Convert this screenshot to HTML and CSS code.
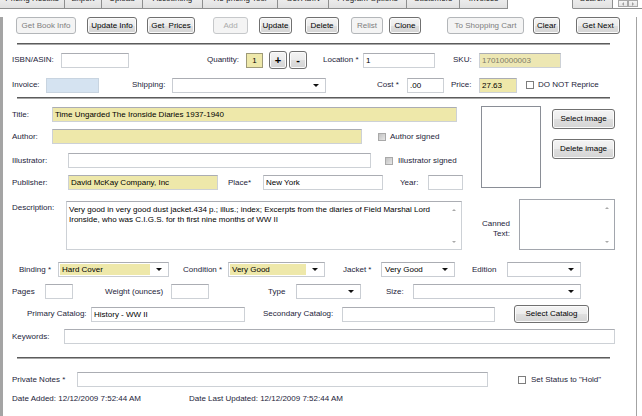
FILE: index.html
```html
<!DOCTYPE html>
<html>
<head>
<meta charset="utf-8">
<title>Book Detail</title>
<link rel="stylesheet" href="styles.css">
</head>
<body>
<div class="tabs">
  <div class="tab tab-pricing">Pricing Results</div>
  <div class="tab tab-export">Export</div>
  <div class="tab tab-upload">Upload</div>
  <div class="tab tab-accounting">Accounting</div>
  <div class="tab tab-repricing">Re-pricing Tool</div>
  <div class="tab tab-asin">Get ASIN</div>
  <div class="tab tab-options">Program Options</div>
  <div class="tab tab-customers">Customers</div>
  <div class="tab tab-invoices">Invoices</div>
  <div class="tab tab-detail current">Book Detail</div>
  <div class="tab tab-search">Search</div>
  <div class="tab-rest">
    <div class="tab-arrow"><span class="tri-left"></span></div>
    <div class="tab-arrow"><span class="tri-right"></span></div>
  </div>
</div>
<div class="page">
  <div class="toolbar">
    <div class="btn dis tb-getinfo">Get Book Info</div>
    <div class="btn tb-updinfo">Update Info</div>
    <div class="btn tb-prices">Get&nbsp; Prices</div>
    <div class="btn dis faint tb-add">Add</div>
    <div class="btn tb-update">Update</div>
    <div class="btn tb-delete">Delete</div>
    <div class="btn dis tb-relist">Relist</div>
    <div class="btn tb-clone">Clone</div>
    <div class="btn dis tb-cart">To Shopping Cart</div>
    <div class="btn tb-clear">Clear</div>
    <div class="btn tb-next">Get Next</div>
  </div>
  <div class="sep sep-top"></div>

  <div class="row row-isbn">
    <span class="lbl isbn-lbl">ISBN/ASIN:</span>
    <div class="inp isbn-inp"></div>
    <span class="lbl qty-lbl">Quantity:</span>
    <div class="qty-box">1</div>
    <div class="btn pm plus-btn">+</div>
    <div class="btn pm minus-btn">-</div>
    <span class="lbl loc-lbl">Location *</span>
    <div class="inp loc-inp">1</div>
    <span class="lbl sku-lbl">SKU:</span>
    <div class="inp sku-inp">17010000003</div>
  </div>

  <div class="row row-invoice">
    <span class="lbl inv-lbl">Invoice:</span>
    <div class="inp inv-inp"></div>
    <span class="lbl ship-lbl">Shipping:</span>
    <div class="combo ship-sel"><span class="val"></span></div>
    <span class="lbl cost-lbl">Cost *</span>
    <div class="inp cost-inp">.00</div>
    <span class="lbl price-lbl">Price:</span>
    <div class="inp yel price-inp">27.63</div>
    <span class="chk norep-chk"></span>
    <span class="lbl norep-lbl">DO NOT Reprice</span>
  </div>
  <div class="sep sep-mid"></div>

  <div class="mid">
    <div class="fields">
      <div class="f-row">
        <span class="lbl title-lbl">Title:</span>
        <div class="inp yel title-inp">Time Ungarded The Ironside Diaries 1937-1940</div>
      </div>
      <div class="f-row f-author">
        <span class="lbl title-lbl">Author:</span>
        <div class="inp yel author-inp"></div>
        <span class="chk gray asig-chk"></span>
        <span class="lbl asig-lbl">Author signed</span>
      </div>
      <div class="f-row f-illus">
        <span class="lbl illus-lbl">Illustrator:</span>
        <div class="inp illus-inp"></div>
        <span class="chk gray isig-chk"></span>
        <span class="lbl isig-lbl">Illustrator signed</span>
      </div>
      <div class="f-row f-pub">
        <span class="lbl illus-lbl">Publisher:</span>
        <div class="inp yel pub-inp">David McKay Company, Inc</div>
        <span class="lbl place-lbl">Place*</span>
        <div class="inp place-inp">New York</div>
        <span class="lbl year-lbl">Year:</span>
        <div class="inp year-inp"></div>
      </div>
    </div>
    <div class="imgbox"></div>
    <div class="imgbtns">
      <div class="btn imgbtn">Select image</div>
      <div class="btn imgbtn">Delete image</div>
    </div>
  </div>

  <div class="desc">
    <span class="lbl desc-lbl">Description:</span>
    <div class="ta desc-ta">
      <div class="ta-text">Very good in very good dust jacket.434 p.; illus.; index; Excerpts from the diaries of Field Marshal Lord Ironside, who was C.I.G.S. for th first nine months of WW II</div>
      <div class="ta-scroll"><span class="tri-up"></span><span class="tri-down"></span></div>
    </div>
    <span class="lbl canned-lbl">Canned<br>Text:</span>
    <div class="ta canned-ta">
      <div class="ta-text"></div>
      <div class="ta-scroll"><span class="tri-up"></span><span class="tri-down"></span></div>
    </div>
  </div>

  <div class="row row-binding">
    <span class="lbl bind-lbl">Binding *</span>
    <div class="combo bind-sel"><span class="val yel">Hard Cover</span></div>
    <span class="lbl cond-lbl">Condition *</span>
    <div class="combo cond-sel"><span class="val yel">Very Good</span></div>
    <span class="lbl jack-lbl">Jacket *</span>
    <div class="combo jack-sel"><span class="val">Very Good</span></div>
    <span class="lbl ed-lbl">Edition</span>
    <div class="combo ed-sel"><span class="val"></span></div>
  </div>

  <div class="row row-pages">
    <span class="lbl pages-lbl">Pages</span>
    <div class="inp pages-inp"></div>
    <span class="lbl wt-lbl">Weight (ounces)</span>
    <div class="inp wt-inp"></div>
    <span class="lbl type-lbl">Type</span>
    <div class="combo type-sel"><span class="val"></span></div>
    <span class="lbl size-lbl">Size:</span>
    <div class="combo size-sel"><span class="val"></span></div>
  </div>

  <div class="row row-catalog">
    <span class="lbl pcat-lbl">Primary Catalog:</span>
    <div class="inp pcat-inp">History - WW II</div>
    <span class="lbl scat-lbl">Secondary Catalog:</span>
    <div class="inp scat-inp"></div>
    <div class="btn selcat-btn">Select Catalog</div>
  </div>

  <div class="row row-keywords">
    <span class="lbl kw-lbl">Keywords:</span>
    <div class="inp kw-inp"></div>
  </div>
  <div class="sep sep-bottom"></div>

  <div class="row row-notes">
    <span class="lbl pn-lbl">Private Notes *</span>
    <div class="inp pn-inp"></div>
    <span class="chk hold-chk"></span>
    <span class="lbl hold-lbl">Set Status to "Hold"</span>
  </div>

  <div class="row row-dates">
    <span class="lbl date-added">Date Added: 12/12/2009 7:52:44 AM</span>
    <span class="lbl">Date Last Updated: 12/12/2009 7:52:44 AM</span>
  </div>
</div>
</body>
</html>
```

FILE: styles.css
```css
* { box-sizing: border-box; }

html, body { margin: 0; padding: 0; }

body {
  width: 642px;
  height: 416px;
  overflow: hidden;
  background: #ffffff;
  font-family: "Liberation Sans", Arial, sans-serif;
  font-size: 8px;
  line-height: 10px;
  color: #000;
}

/* ---------- tab strip ---------- */
.tabs {
  display: flex;
  align-items: flex-end;
  height: 9px;
  overflow: hidden;
}
.tab {
  flex: none;
  height: 18px;
  display: flex;
  align-items: flex-end;
  justify-content: center;
  padding-bottom: 4px;
  background: linear-gradient(#f7f7f7, #e1e1e1);
  border-right: 1px solid #8e8f8f;
  border-bottom: 1px solid #8e8f8f;
  color: #1b1b1b;
  white-space: nowrap;
}
.tab.current {
  background: #ffffff;
  border-bottom-color: #ffffff;
  padding-bottom: 7px;
}
.tab-pricing { width: 65px; }
.tab-export { width: 37px; }
.tab-upload { width: 41px; }
.tab-accounting { width: 60px; }
.tab-repricing { width: 75px; }
.tab-asin { width: 51px; }
.tab-options { width: 78px; }
.tab-customers { width: 53px; }
.tab-invoices { width: 48px; }
.tab-detail { width: 65px; }
.tab-search { width: 40px; }
.tab-rest {
  flex: 1;
  height: 9px;
  display: flex;
  justify-content: flex-end;
  align-items: flex-start;
  padding-right: 4px;
  border-bottom: 1px solid #8e8f8f;
}
.tab-arrow {
  width: 10px;
  height: 7px;
  border: 1px solid #a8a8a8;
  background: linear-gradient(#f6f6f6, #e4e4e4);
  display: flex;
  align-items: center;
  justify-content: center;
}
.tri-left {
  border-top: 2px solid transparent;
  border-bottom: 2px solid transparent;
  border-right: 2px solid #a0a0a0;
}
.tri-right {
  border-top: 2px solid transparent;
  border-bottom: 2px solid transparent;
  border-left: 2px solid #a0a0a0;
}

/* ---------- page ---------- */
.page {
  width: 637px;
  height: 407px;
  border-left: 3px solid #a4a4a4;
  border-right: 1px solid #a3a3a3;
  background: #ffffff;
}

.row {
  display: flex;
  align-items: center;
}

.lbl {
  flex: none;
  white-space: nowrap;
  color: #24243a;
}

.inp {
  flex: none;
  height: 15px;
  border: 1px solid #cdd1d6;
  border-top-color: #abadb3;
  background: #ffffff;
  padding: 0 2px;
  line-height: 13px;
  white-space: nowrap;
  overflow: hidden;
  color: #000;
}
.yel { background: #eee8aa; }

.chk {
  flex: none;
  width: 8px;
  height: 8px;
  border: 1px solid #7d7d7d;
  background: #ffffff;
}
.chk.gray {
  border-color: #a9a9a9;
  background: linear-gradient(135deg, #c2c2c2, #e6e6e6);
}

.combo {
  flex: none;
  height: 15px;
  display: flex;
  align-items: stretch;
  padding: 1px;
  border: 1px solid #c9cdd3;
  border-top-color: #abadb3;
  background: #ffffff;
}
.combo .val {
  flex: 1;
  padding-left: 2px;
  line-height: 11px;
  white-space: nowrap;
  overflow: hidden;
}
.combo::after {
  content: "";
  flex: none;
  align-self: center;
  margin: 0 5px 0 6px;
  border-left: 3px solid transparent;
  border-right: 3px solid transparent;
  border-top: 3px solid #111;
}

.btn {
  flex: none;
  height: 17px;
  display: flex;
  align-items: center;
  justify-content: center;
  border: 1px solid #707070;
  border-radius: 3px;
  background: linear-gradient(#f4f4f4 0%, #ececec 50%, #dfdfdf 51%, #d4d4d4 100%);
  box-shadow: inset 0 0 0 1px #fbfbfb;
  color: #000;
  white-space: nowrap;
}
.btn.dis {
  border-color: #b3b6b9;
  background: #f4f4f4;
  box-shadow: none;
  color: #7e7e7e;
}
.btn.faint { color: #ababab; border-color: #c6c8ca; }

.sep {
  margin-left: 14px;
  width: 593px;
  height: 2px;
  background: linear-gradient(#5c5c5c 50%, #a8a8a8 50%);
}

/* ---------- toolbar ---------- */
.toolbar {
  display: flex;
  margin-top: 8px;
  height: 17px;
}
.tb-getinfo { margin-left: 13px; width: 60px; }
.tb-updinfo { margin-left: 11px; width: 50px; }
.tb-prices { margin-left: 10px; width: 48px; }
.tb-add { margin-left: 18px; width: 35px; }
.tb-update { margin-left: 11px; width: 33px; }
.tb-delete { margin-left: 13px; width: 34px; }
.tb-relist { margin-left: 12px; width: 32px; }
.tb-clone { margin-left: 6px; width: 32px; }
.tb-cart { margin-left: 26px; width: 77px; }
.tb-clear { margin-left: 9px; width: 27px; }
.tb-next { margin-left: 16px; width: 44px; }

.sep-top { margin-top: 9px; }

/* ---------- ISBN row ---------- */
.row-isbn { margin-top: 6px; height: 18px; }
.isbn-lbl { margin-left: 9px; width: 49px; }
.isbn-inp { width: 68px; }
.qty-lbl { margin-left: 78px; width: 39px; }
.qty-box {
  flex: none;
  width: 17px;
  height: 15px;
  border: 1px solid #9e9a78;
  background: #eee8aa;
  text-align: center;
  line-height: 13px;
}
.pm { height: 18px; width: 18px; font-size: 11px; font-weight: bold; }
.plus-btn { margin-left: 6px; }
.minus-btn { margin-left: 2px; }
.loc-lbl { margin-left: 16px; width: 40px; }
.loc-inp { width: 72px; }
.sku-lbl { margin-left: 18px; width: 26px; }
.sku-inp { width: 82px; background: #ede7b3; color: #7e7b68; }

/* ---------- invoice row ---------- */
.row-invoice { margin-top: 8px; height: 16px; }
.inv-lbl { margin-left: 9px; width: 34px; }
.inv-inp { width: 53px; background: #d5e3f1; border-color: #c8d4e0; }
.ship-lbl { margin-left: 33px; width: 40px; }
.ship-sel { width: 154px; }
.cost-lbl { margin-left: 51px; width: 30px; }
.cost-inp { width: 37px; }
.price-lbl { margin-left: 7px; width: 28px; }
.price-inp { width: 38px; }
.norep-chk { margin-left: 9px; }
.norep-lbl { margin-left: 4px; }

.sep-mid { margin-top: 4px; }

/* ---------- title / author block ---------- */
.mid {
  display: flex;
  align-items: flex-start;
  height: 91px;
}
.fields { flex: none; width: 478px; padding-top: 8px; }
.f-row { display: flex; align-items: center; height: 15px; }
.f-author { margin-top: 7px; }
.f-illus { margin-top: 9px; }
.f-pub { margin-top: 7px; }
.title-lbl { margin-left: 9px; width: 40px; }
.title-inp { width: 405px; }
.author-inp { width: 310px; }
.asig-chk { margin-left: 16px; }
.asig-lbl { margin-left: 4px; }
.illus-lbl { margin-left: 9px; width: 56px; }
.illus-inp { width: 303px; }
.isig-chk { margin-left: 14px; }
.isig-lbl { margin-left: 5px; }
.pub-inp { width: 150px; }
.place-lbl { margin-left: 10px; width: 35px; }
.place-inp { width: 120px; }
.year-lbl { margin-left: 17px; width: 28px; }
.year-inp { width: 35px; }
.imgbox {
  flex: none;
  margin-top: 7px;
  width: 60px;
  height: 82px;
  border: 1px solid #8a8e96;
  background: #ffffff;
}
.imgbtns {
  flex: none;
  margin-left: 11px;
  margin-top: 10px;
  width: 63px;
  display: flex;
  flex-direction: column;
  gap: 10px;
}
.imgbtn { height: 20px; }

/* ---------- description ---------- */
.desc {
  display: flex;
  align-items: flex-start;
  margin-top: 9px;
  height: 51px;
}
.desc-lbl { margin-left: 9px; width: 54px; margin-top: 4px; }
.ta {
  flex: none;
  display: flex;
  border: 1px solid #cdd1d6;
  border-top-color: #abadb3;
  background: #ffffff;
}
.ta-text {
  flex: 1;
  padding: 3px 2px 0 2px;
  line-height: 10px;
  overflow: hidden;
}
.ta-scroll {
  flex: none;
  width: 15px;
  display: flex;
  flex-direction: column;
  justify-content: space-between;
  align-items: center;
  padding: 7px 0 6px;
}
.tri-up {
  border-left: 2px solid transparent;
  border-right: 2px solid transparent;
  border-bottom: 2px solid #a9a9a9;
}
.tri-down {
  border-left: 2px solid transparent;
  border-right: 2px solid transparent;
  border-top: 2px solid #a9a9a9;
}
.desc-ta { width: 396px; height: 49px; margin-top: 2px; }
.canned-lbl { margin-left: 19px; width: 29px; margin-top: 20px; text-align: right; }
.canned-ta { margin-left: 9px; width: 96px; height: 51px; border-color: #a2a6ad; }

/* ---------- binding row ---------- */
.row-binding { margin-top: 12px; height: 15px; }
.combo .val.yel { background: #eee8aa; }
.bind-lbl { margin-left: 16px; width: 39px; }
.bind-sel { width: 111px; }
.cond-lbl { margin-left: 14px; width: 45px; }
.cond-sel { width: 97px; }
.jack-lbl { margin-left: 18px; width: 38px; }
.jack-sel { width: 74px; }
.ed-lbl { margin-left: 17px; width: 35px; }
.ed-sel { width: 74px; }

/* ---------- pages row ---------- */
.row-pages { margin-top: 7px; height: 15px; }
.pages-lbl { margin-left: 9px; width: 33px; }
.pages-inp { width: 28px; }
.wt-lbl { margin-left: 32px; width: 66px; }
.wt-inp { width: 38px; }
.type-lbl { margin-left: 59px; width: 28px; }
.type-sel { width: 65px; }
.size-lbl { margin-left: 25px; width: 27px; }
.size-sel { width: 168px; }

/* ---------- catalog row ---------- */
.row-catalog { margin-top: 6px; height: 18px; }
.pcat-lbl { margin-left: 24px; width: 64px; }
.pcat-inp { width: 154px; }
.scat-lbl { margin-left: 18px; width: 79px; }
.scat-inp { width: 153px; }
.selcat-btn { margin-left: 19px; width: 75px; height: 18px; }

/* ---------- keywords ---------- */
.row-keywords { margin-top: 6px; height: 15px; }
.kw-lbl { margin-left: 9px; width: 52px; }
.kw-inp { width: 551px; }

.sep-bottom { margin-top: 13px; }

/* ---------- notes ---------- */
.row-notes { margin-top: 13px; height: 15px; }
.pn-lbl { margin-left: 9px; width: 65px; }
.pn-inp { width: 411px; }
.hold-chk { margin-left: 30px; }
.hold-lbl { margin-left: 5px; }

.row-dates { margin-top: 7px; height: 10px; }
.date-added { margin-left: 9px; width: 177px; }
```
